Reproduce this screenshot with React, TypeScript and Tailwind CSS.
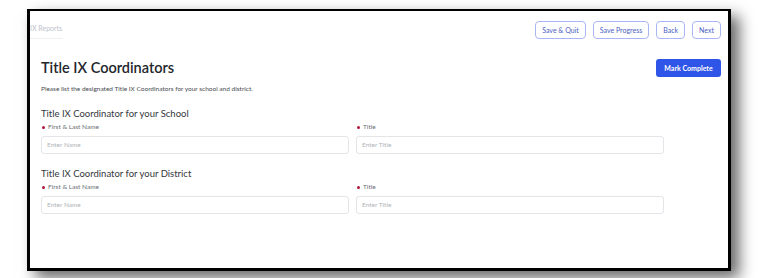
import React from "react";

const font = { fontFamily: "Lato, 'Open Sans', sans-serif" };

const Field = ({ label, placeholder }: { label: string; placeholder: string }) => (
  <div>
    <div className="flex items-center h-[10px] text-[6.5px] text-[#6b7076]">
      <span className="w-[3px] h-[3px] rounded-full bg-[#b0173c] mr-[3px] ml-[1px]" />
      {label}
    </div>
    <div className="mt-[4px] h-[18px] border border-[#e3e5e9] rounded-[3px] flex items-center pl-[5px] text-[6.5px] text-[#b0b4b9]">
      {placeholder}
    </div>
  </div>
);

const Section = ({ title }: { title: string }) => (
  <div>
    <h3 className="text-[9.5px] text-[#34373c] leading-[12px] h-[12px]">{title}</h3>
    <div className="mt-[2px] grid grid-cols-[308px_308px] gap-x-[7px]">
      <Field label="First & Last Name" placeholder="Enter Name" />
      <Field label="Title" placeholder="Enter Title" />
    </div>
  </div>
);

const OutlineButton = ({ children }: { children: React.ReactNode }) => (
  <button className="h-[18px] px-[6px] border border-[#aab6f4] rounded-[4px] text-[7px] text-[#4d60c2] bg-white">
    {children}
  </button>
);

export default function App() {
  return (
    <div className="w-[758px] h-[278px] bg-white overflow-hidden" style={font}>
      <div className="ml-[27px] mt-[9px] w-[704px] h-[262px] border-[3px] border-t-2 border-black bg-white shadow-[8px_7px_14px_rgba(0,0,0,0.6)]">
        <div className="pt-[10px] pr-[7px] flex justify-between items-start">
          <div className="pt-[2px] w-[33px] border-b border-[#eef0f2] pb-[4px] text-[7px] text-[#bcc2ca] whitespace-nowrap">
            IX Reports
          </div>
          <div className="flex gap-[7px]">
            <OutlineButton>Save &amp; Quit</OutlineButton>
            <OutlineButton>Save Progress</OutlineButton>
            <OutlineButton>Back</OutlineButton>
            <OutlineButton>Next</OutlineButton>
          </div>
        </div>

        <div className="pl-[11px] pr-[7px]">
          <div className="mt-[20px] flex justify-between items-center">
            <h1 className="text-[14.5px] font-semibold text-[#23262b] leading-[18px]">Title IX Coordinators</h1>
            <button className="h-[18px] w-[65px] rounded-[3px] bg-[#2f55e8] text-white text-[7px] font-bold">
              Mark Complete
            </button>
          </div>
          <p className="mt-[7px] text-[6.5px] text-[#4a4d52] leading-[9px]">
            Please list the designated Title IX Coordinators for your school and district.
          </p>
          <div className="mt-[15px] flex flex-col gap-[14px]">
            <Section title="Title IX Coordinator for your School" />
            <Section title="Title IX Coordinator for your District" />
          </div>
        </div>
      </div>
    </div>
  );
}
